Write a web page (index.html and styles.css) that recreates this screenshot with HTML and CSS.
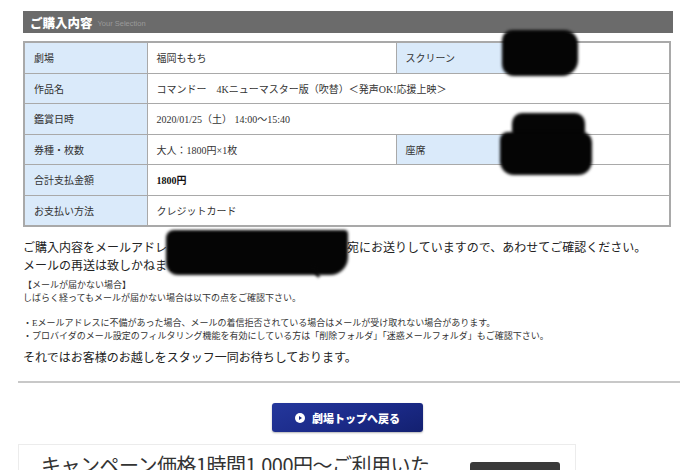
FILE: index.html
```html
<!DOCTYPE html>
<html lang="ja">
<head>
<meta charset="utf-8">
<link rel="stylesheet" href="styles.css">
</head>
<body>
<div class="page">
  <div class="wrap">
    <div class="head-bar"><span class="head-title">ご購入内容</span><span class="head-sub">Your Selection</span></div>
    <table class="info">
      <colgroup><col class="c1"><col class="c2"><col class="c3"><col class="c4"></colgroup>
      <tr><th>劇場</th><td>福岡ももち</td><th>スクリーン</th><td></td></tr>
      <tr><th>作品名</th><td colspan="3">コマンドー　4Kニューマスター版（吹替）＜発声OK!応援上映＞</td></tr>
      <tr><th>鑑賞日時</th><td colspan="3">2020/01/25（土） 14:00〜15:40</td></tr>
      <tr><th>券種・枚数</th><td>大人：1800円×1枚</td><th>座席</th><td></td></tr>
      <tr><th>合計支払金額</th><td colspan="3"><b>1800円</b></td></tr>
      <tr><th>お支払い方法</th><td colspan="3">クレジットカード</td></tr>
    </table>
    <p class="lead">ご購入内容をメールアドレス　　　　　　　　　　　　　　宛にお送りしていますので、あわせてご確認ください。<br>メールの再送は致しかねますので、ご了承ください。</p>
    <p class="small">【メールが届かない場合】<br>しばらく経ってもメールが届かない場合は以下の点をご確認下さい。</p>
    <p class="small">・Eメールアドレスに不備があった場合、メールの着信拒否されている場合はメールが受け取れない場合があります。<br>・プロバイダのメール設定のフィルタリング機能を有効にしている方は「削除フォルダ」「迷惑メールフォルダ」もご確認下さい。</p>
    <p class="closing">それではお客様のお越しをスタッフ一同お待ちしております。</p>
  </div>
  <hr class="divider">
  <div class="btn-row">
    <a class="back-btn" href="#"><svg width="10" height="10" viewBox="0 0 10 10"><circle cx="5" cy="5" r="5" fill="#fff"/><path d="M4 3 L7 5 L4 7 Z" fill="#1b2a85"/></svg><span>劇場トップへ戻る</span></a>
  </div>
  <div class="promo">
    <span class="promo-text">キャンペーン価格1時間1,000円〜ご利用いた</span>
    <span class="promo-btn"></span>
  </div>
  <div class="blot b1"></div>
  <div class="blot b2a"></div>
  <div class="blot b2b"></div>
  <div class="blot b3"></div>
  <div class="blot b4"></div>
</div>
</body>
</html>
```
FILE: styles.css
```css
html, body {
  margin: 0;
  padding: 0;
  background: #fff;
}
.page {
  position: relative;
  width: 680px;
  height: 470px;
  overflow: hidden;
  font-family: "Liberation Serif", "Noto Sans CJK JP", serif;
  color: #222;
}
.wrap {
  padding: 11px 9px 0 23px;
}
.head-bar {
  height: 22px;
  background: #6b6b6b;
  display: flex;
  align-items: center;
  padding-left: 7px;
  width: 643px;
}
.head-title {
  font-family: "Noto Sans CJK JP", sans-serif;
  font-weight: 900;
  font-size: 12.5px;
  color: #fff;
}
.head-sub {
  font-family: "Liberation Sans", sans-serif;
  font-size: 7.5px;
  color: #9a9a9a;
  margin-left: 5px;
  margin-top: 3px;
}
.info {
  margin-top: 8px;
  width: 648px;
  border-collapse: collapse;
  border: 2px solid #a9a9a9;
  table-layout: fixed;
}
.c1 { width: 123px; }
.c2 { width: 249px; }
.c3 { width: 113px; }
.c4 { width: auto; }
.info th, .info td {
  height: 29.5px;
  border: 1.5px solid #a9a9a9;
  font-size: 10px;
  text-align: left;
  padding: 0 0 0 9px;
  font-weight: normal;
  white-space: nowrap;
  color: #333;
}
.info th {
  background: #daeafa;
}
.info td b {
  font-weight: bold;
  color: #111;
}
.lead {
  margin: 12px 0 0;
  font-size: 12px;
  line-height: 18px;
  color: #222;
}
.small {
  margin: 4px 0 0;
  font-size: 9px;
  line-height: 13px;
  color: #333;
}
.small + .small {
  margin-top: 12px;
}
.closing {
  margin: 6px 0 0;
  font-size: 12px;
  line-height: 18px;
  color: #222;
}
.divider {
  margin: 14px 0 0 18px;
  border: 0;
  height: 2px;
  background: #c8c8c8;
}
.btn-row {
  display: flex;
  justify-content: center;
  padding: 20px 0 0 15px;
  height: 30px;
}
.back-btn {
  width: 151px;
  height: 29px;
  border-radius: 3px;
  background: linear-gradient(160deg, #24379c 0%, #1b2a88 55%, #132070 100%);
  box-shadow: 0 1px 2px rgba(0,0,0,0.3);
  display: flex;
  align-items: center;
  justify-content: center;
  gap: 7px;
  text-decoration: none;
  color: #fff;
  font-family: "Noto Sans CJK JP", sans-serif;
  font-weight: 900;
  font-size: 11px;
}
.promo {
  margin: 11px 0 0 18px;
  width: 558px;
  height: 40px;
  border: 1px solid #ececec;
  border-bottom: 0;
  display: flex;
  align-items: flex-start;
  justify-content: space-between;
  padding: 0 15px 0 22px;
  box-sizing: border-box;
}
.promo-text {
  font-family: "Noto Sans CJK JP", sans-serif;
  font-size: 20px;
  line-height: 22px;
  color: #333;
  margin-top: 9px;
  letter-spacing: -0.5px;
}
.promo-btn {
  width: 90px;
  height: 20px;
  background: #3a3a3a;
  border-radius: 3px;
  margin-top: 17px;
}
.blot {
  position: absolute;
  background: #050505;
  filter: blur(1.5px);
}
.b1 { left: 502px; top: 30px; width: 76px; height: 46px; border-radius: 10px 14px 16px 12px; }
.b2a { left: 512px; top: 113px; width: 73px; height: 28px; border-radius: 10px; }
.b2b { left: 500px; top: 132px; width: 92px; height: 43px; border-radius: 8px 10px 14px 14px; }
.b3 { left: 166px; top: 230px; width: 182px; height: 45px; border-radius: 8px 4px 18px 12px; }
.b4 { left: 314px; top: 264px; width: 3px; height: 14px; transform: rotate(-30deg); border-radius: 2px; }
```
